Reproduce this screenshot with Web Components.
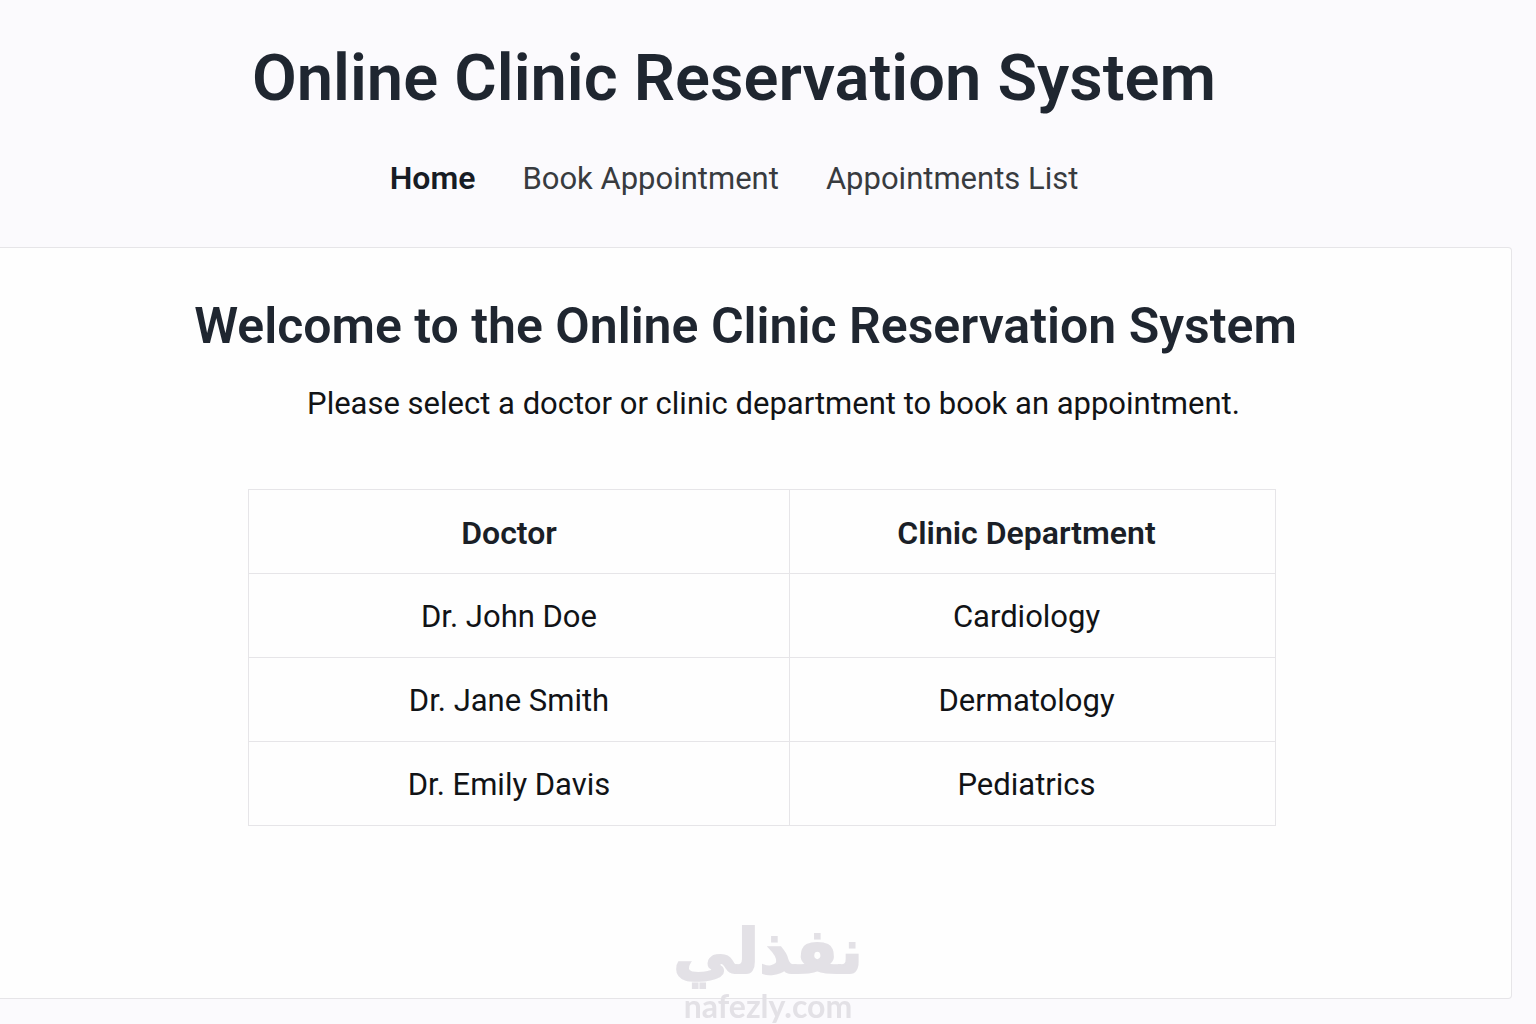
<!DOCTYPE html>
<html lang="en">
<head>
<meta charset="UTF-8">
<meta name="viewport" content="width=device-width, initial-scale=1.0">
<title>Online Clinic Reservation System</title>
<style>
  body {
    margin: 0;
    background: #fbfafd;
    color: #111316;
    font-family: Roboto, "Liberation Sans", sans-serif;
    font-size: 31px;
    line-height: 40px;
  }
</style>
</head>
<body>
<clinic-header heading="Online Clinic Reservation System">
  <nav-link href="#home" active>Home</nav-link>
  <nav-link href="#book">Book Appointment</nav-link>
  <nav-link href="#list">Appointments List</nav-link>
</clinic-header>

<clinic-card>
  <span slot="title">Welcome to the Online Clinic Reservation System</span>
  <span slot="intro">Please select a doctor or clinic department to book an appointment.</span>
  <doctor-table></doctor-table>
</clinic-card>

<site-mark></site-mark>

<script>
class ClinicHeader extends HTMLElement {
  constructor() {
    super();
    this.attachShadow({ mode: 'open' });
  }

  connectedCallback() {
    this.shadowRoot.innerHTML = `
      <style>
        :host {
          display: block;
          padding: 40px 68px 48px 0;
          text-align: center;
        }

        h1 {
          margin: 0;
          color: #1f2630;
          font-size: 65px;
          font-weight: 600;
          line-height: 76px;
        }

        nav {
          display: flex;
          align-items: baseline;
          justify-content: center;
          gap: 47px;
          margin-top: 42px;
        }
      </style>

      <header>
        <h1>${this.getAttribute('heading')}</h1>
        <nav><slot></slot></nav>
      </header>
    `;
  }
}

class NavLink extends HTMLElement {
  constructor() {
    super();
    this.attachShadow({ mode: 'open' });
  }

  connectedCallback() {
    this.shadowRoot.innerHTML = `
      <style>
        :host {
          display: block;
        }

        a {
          color: #383b3f;
          text-decoration: none;
        }

        :host([active]) a {
          color: #171c24;
          font-size: 32px;
          font-weight: 600;
        }
      </style>

      <a href="${this.getAttribute('href')}"><slot></slot></a>
    `;
  }
}

class ClinicCard extends HTMLElement {
  constructor() {
    super();
    this.attachShadow({ mode: 'open' });
  }

  connectedCallback() {
    this.shadowRoot.innerHTML = `
      <style>
        :host {
          display: block;
          margin-right: 24px;
          padding: 48px 0 172px;
          background: #fefefe;
          border: 1px solid #e6e5e8;
          border-left: 0;
          border-radius: 0 4px 4px 0;
          text-align: center;
        }

        h2 {
          margin: 0;
          padding-right: 20px;
          color: #1f2630;
          font-size: 50px;
          font-weight: 600;
          line-height: 60px;
        }

        p {
          margin: 28px 0 65px;
          padding-left: 36px;
        }
      </style>

      <main>
        <h2><slot name="title"></slot></h2>
        <p><slot name="intro"></slot></p>
        <slot></slot>
      </main>
    `;
  }
}

class DoctorTable extends HTMLElement {
  constructor() {
    super();
    this.attachShadow({ mode: 'open' });
    this.doctors = [
      ['Dr. John Doe', 'Cardiology'],
      ['Dr. Jane Smith', 'Dermatology'],
      ['Dr. Emily Davis', 'Pediatrics']
    ];
  }

  connectedCallback() {
    const rows = this.doctors
      .map(([name, department]) => `<tr><td>${name}</td><td>${department}</td></tr>`)
      .join('');

    this.shadowRoot.innerHTML = `
      <style>
        :host {
          display: block;
          padding-left: 13px;
        }

        table {
          width: 1028px;
          max-width: 100%;
          margin: 0 auto;
          border-collapse: collapse;
          table-layout: fixed;
        }

        th,
        td {
          box-sizing: border-box;
          height: 84px;
          padding: 3px 12px 0 0;
          border: 1px solid #e6e5e8;
        }

        th {
          color: #1a1f27;
          font-size: 32px;
          font-weight: 600;
        }

        th:first-child,
        td:first-child {
          width: 541px;
          padding-right: 20px;
        }
      </style>

      <table>
        <thead>
          <tr><th scope="col">Doctor</th><th scope="col">Clinic Department</th></tr>
        </thead>
        <tbody>${rows}</tbody>
      </table>
    `;
  }
}

class SiteMark extends HTMLElement {
  constructor() {
    super();
    this.attachShadow({ mode: 'open' });
  }

  connectedCallback() {
    this.shadowRoot.innerHTML = `
      <style>
        /* watermark that floats over the bottom of the page */
        :host {
          position: fixed;
          right: 0;
          bottom: 0;
          left: 0;
          display: grid;
          justify-items: center;
          color: #e3e1e6;
          font-weight: 700;
          pointer-events: none;
        }

        .arabic {
          font-family: "DejaVu Sans", sans-serif;
          font-size: 62px;
          line-height: 72px;
          -webkit-text-stroke: 2px #e3e1e6;
        }

        .latin {
          font-family: Lato, sans-serif;
          font-size: 32px;
          line-height: 36px;
        }
      </style>

      <span class="arabic" lang="ar" dir="rtl">نفذلي</span>
      <span class="latin">nafezly.com</span>
    `;
  }
}

customElements.define('clinic-header', ClinicHeader);
customElements.define('nav-link', NavLink);
customElements.define('clinic-card', ClinicCard);
customElements.define('doctor-table', DoctorTable);
customElements.define('site-mark', SiteMark);
</script>
</body>
</html>
